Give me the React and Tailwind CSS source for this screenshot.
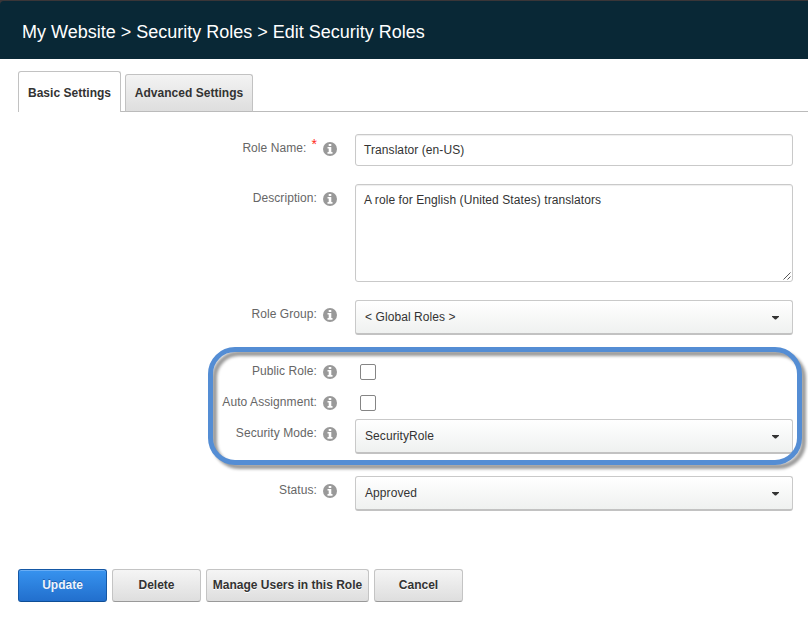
const FONT = "font-['Liberation_Sans',Arial,sans-serif]";

function InfoIcon() {
  return (
    <svg className="mt-[8px] ml-[6px] h-[14px] w-[14px] shrink-0" viewBox="0 0 14 14">
      <circle cx="7" cy="7" r="7" fill="#999" />
      <path d="M5.7 2h2.6v2H5.7zM4.5 5h3.8v5h1.2v1.7H4.5V10h1.2V6.6H4.5z" fill="#fff" />
    </svg>
  );
}

function Row({ label, required, height, children }) {
  return (
    <div className={`flex items-start ${height}`}>
      <div className="flex w-[337px] shrink-0 items-start justify-end">
        <span className="mt-[5px] text-[12px] leading-[18px] tracking-[0.08px] whitespace-nowrap text-[#666]">
          {label}
        </span>
        {required && <span className="mt-[2px] ml-[5px] text-[14px] leading-[16px] text-[#ff2a1a]">*</span>}
        <InfoIcon />
      </div>
      <div className="ml-[18px] w-[438px]">{children}</div>
    </div>
  );
}

function Select({ value }) {
  return (
    <div className="flex h-[35px] items-center justify-between rounded-[3px] border border-b-2 border-[#c9c9c9] border-b-[#c2c2c2] bg-linear-to-b from-white to-[#eff1f0] pr-[13px] pl-[9px] text-[12px] tracking-[0.08px] text-[#333]">
      <span>{value}</span>
      <svg className="mt-[2px] h-[4px] w-[7px]" viewBox="0 0 7 4">
        <path d="M0 0h7v.7L4 3.5H3L0 .7z" fill="#333" />
      </svg>
    </div>
  );
}

function Checkbox() {
  return <div className="mt-[7px] ml-[5px] h-4 w-4 rounded-[2px] border border-[#858585] bg-white" />;
}

function Button({ children, width, primary }) {
  const tone = primary
    ? "border-[#1558a5] border-b-[#0e4e96] from-[#3793ef] to-[#226fcd] text-[#eef4fc] [text-shadow:0_-1px_0_#1d5fae] shadow-[inset_0_1px_0_#6aaef5]"
    : "border-[#c4c4c4] border-b-[#999] from-[#f5f5f5] to-[#dedede] text-[#333] [text-shadow:0_1px_0_#fff]";
  return (
    <button
      className={`h-[33px] rounded-[3px] border bg-linear-to-b pb-[2px] text-[12px] font-bold whitespace-nowrap ${width} ${tone}`}
    >
      {children}
    </button>
  );
}

export default function App() {
  return (
    <div className={`relative h-[617px] w-[808px] overflow-hidden bg-white ${FONT}`}>
      <div className="h-[59px] bg-[#3a3638] pt-px">
        <header className="flex h-[58px] items-center rounded-tl-[4px] bg-[#092836] pl-[22px] text-[18px] whitespace-nowrap text-white">
          <h1 className="mt-[4px]">My Website &gt; Security Roles &gt; Edit Security Roles</h1>
        </header>
      </div>

      <nav className="flex h-[53px] items-end text-[12px] font-bold tracking-[0.03px] whitespace-nowrap text-[#333]">
        <div className="h-px w-[18px]" />
        <div className="flex h-[41px] w-[103px] items-center justify-center rounded-t-[3px] border border-b-0 border-[#c2c2c2] pt-px">
          Basic Settings
        </div>
        <div className="h-px w-[4px] bg-[#bbb]" />
        <div className="flex h-[38px] w-[128px] items-center justify-center rounded-t-[3px] border border-[#c2c2c2] border-b-[#bbb] bg-linear-to-b from-[#f3f3f3] to-[#dedede]">
          Advanced Settings
        </div>
        <div className="h-px flex-1 bg-[#bbb]" />
      </nav>

      <main className="pt-[22px]">
        <Row label="Role Name:" required height="h-[50px]">
          <div className="flex h-[32px] items-center rounded-[3px] border border-[#c9c9c9] pl-[8px] text-[12px] tracking-[0.08px] text-[#333] shadow-[inset_0_1px_1px_#eee]">
            Translator (en-US)
          </div>
        </Row>
        <Row label="Description:" height="h-[116px]">
          <div className="flex h-[98px] justify-between rounded-[3px] border border-[#c9c9c9] pl-[8px] text-[12px] tracking-[0.08px] text-[#333] shadow-[inset_0_1px_1px_#eee]">
            <span className="mt-[6px] leading-[18px]">A role for English (United States) translators</span>
            <svg className="mr-px mb-px h-[8px] w-[8px] self-end" viewBox="0 0 8 8">
              <path d="M.5 7.5l7-7M4.5 7.5l3-3" stroke="#555" strokeWidth="1" />
            </svg>
          </div>
        </Row>
        <Row label="Role Group:" height="h-[57px]">
          <Select value="< Global Roles >" />
        </Row>
        <Row label="Public Role:" height="h-[31px]">
          <Checkbox />
        </Row>
        <Row label="Auto Assignment:" height="h-[31px]">
          <Checkbox />
        </Row>
        <Row label="Security Mode:" height="h-[57px]">
          <Select value="SecurityRole" />
        </Row>
        <Row label="Status:" height="h-[93px]">
          <Select value="Approved" />
        </Row>
      </main>

      <footer className="flex gap-[5px] pl-[18px]">
        <Button width="w-[89px]" primary>Update</Button>
        <Button width="w-[89px]">Delete</Button>
        <Button width="w-[163px]">Manage Users in this Role</Button>
        <Button width="w-[89px]">Cancel</Button>
      </footer>

      <div className="pointer-events-none absolute top-[347px] left-[208px] h-[118px] w-[594px] rounded-[27px] border-[5px] border-[#548dd4] drop-shadow-[4px_4px_1.5px_rgba(0,0,0,0.4)]" />
    </div>
  );
}
